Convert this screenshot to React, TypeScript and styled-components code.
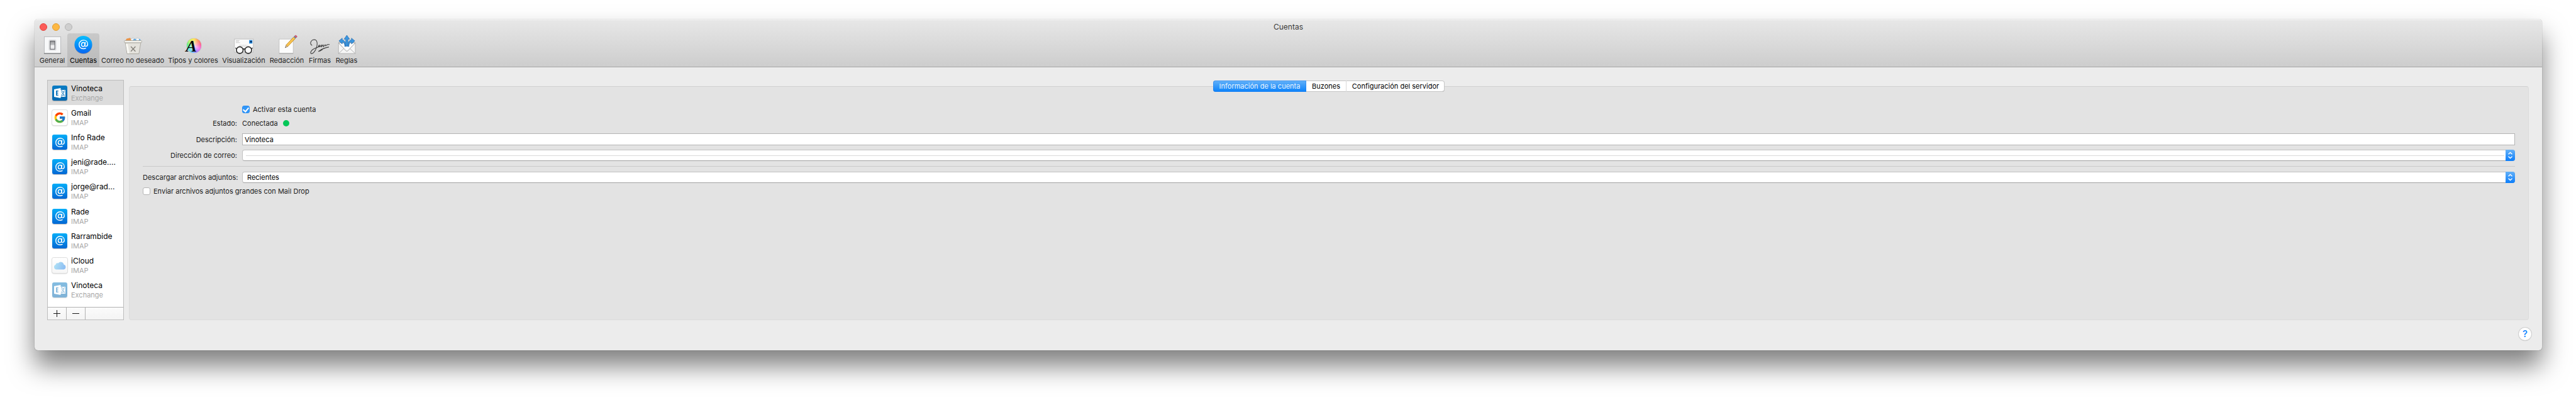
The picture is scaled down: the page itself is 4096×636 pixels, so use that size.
import React, { useState } from "react";
import styled, { createGlobalStyle, css } from "styled-components";
import { FcGoogle } from "react-icons/fc";

const GlobalStyle = createGlobalStyle`
  * { box-sizing: border-box; }
  body {
    margin: 0;
    background: #fff;
    color: #1c1c1c;
    font-family: Inter, Roboto, sans-serif;
    font-size: 11px;
    line-height: 16px;
  }
  button, input, select { font: inherit; color: inherit; margin: 0; padding: 0; }
`;

const Desktop = styled.div`
  display: flex;
  min-height: 100vh;
  padding: 31px 54px 79px 55px;
`;

const Window = styled.div`
  flex: 1;
  display: flex;
  flex-direction: column;
  background: #ececec;
  border-radius: 5px;
  box-shadow: 0 0 1px rgba(0, 0, 0, 0.6), 0 25px 40px rgba(0, 0, 0, 0.5);
`;

const Header = styled.header`
  background: linear-gradient(#e7e7e7, #cdcdcd);
  border-top: 1px solid #f6f6f6;
  border-bottom: 1px solid #a6a6a6;
  border-radius: 5px 5px 0 0;
`;

const TitleBar = styled.div`
  display: grid;
  grid-template-columns: 1fr auto 1fr;
  align-items: center;
  height: 21px;
`;

const Title = styled.h1`
  margin: 0;
  font-size: 12px;
  font-weight: 400;
  line-height: 21px;
  color: #3a3a3a;
`;

const Lights = styled.div`
  display: flex;
  gap: 8px;
  padding-left: 8px;
`;

const Light = styled.button<{ $fill: string; $edge: string }>`
  width: 12px;
  height: 12px;
  border-radius: 50%;
  border: 1px solid ${(p) => p.$edge};
  background: ${(p) => p.$fill};
`;

const Toolbar = styled.nav`
  display: flex;
  padding-left: 4px;
`;

const Tool = styled.button<{ $width: number; $active?: boolean }>`
  display: flex;
  flex-direction: column;
  align-items: center;
  gap: 2px;
  width: ${(p) => p.$width}px;
  height: 53px;
  padding-top: 3px;
  border: 0;
  border-radius: 4px 4px 0 0;
  background: ${(p) => (p.$active ? "linear-gradient(#c9c9c9, #b9b9b9)" : "none")};
  color: ${(p) => (p.$active ? "#000" : "#262626")};
  line-height: 14px;
  white-space: nowrap;
`;

const ToolIcon = styled.svg`
  width: 31px;
  height: 31px;
  flex: none;
  overflow: visible;
`;

const Wheel = styled.span`
  position: relative;
  width: 31px;
  height: 31px;
  flex: none;
  &::before {
    content: "";
    position: absolute;
    left: 5px;
    top: 5px;
    width: 23px;
    height: 23px;
    border-radius: 50%;
    background: radial-gradient(rgba(255, 255, 255, 0.8), rgba(255, 255, 255, 0) 70%),
      conic-gradient(#ffe14a, #ff8a5c, #ff5a8c, #f56af0, #9a7dff, #5cc6ff, #5cf5d0, #5cf07a, #c8f55a, #ffe14a);
    box-shadow: 0 0 1px rgba(0, 0, 0, 0.4);
  }
`;

const WheelLetter = styled.span`
  position: absolute;
  left: 4px;
  top: 4px;
  font: italic 700 26px/27px "Liberation Serif", serif;
  color: #0a0a0a;
`;

const Body = styled.main`
  flex: 1;
  display: flex;
  gap: 8px;
  padding: 20px 21px 0 20px;
`;

const Sidebar = styled.aside`
  display: flex;
  flex-direction: column;
  width: 122px;
  flex: none;
  border: 1px solid #bdbdbd;
  background: #fff;
`;

const Accounts = styled.ul`
  flex: 1;
  display: flex;
  flex-direction: column;
  margin: 0;
  padding: 0 0 7px;
  list-style: none;
`;

const AccountItem = styled.li`
  flex: 1;
  display: flex;
`;

const AccountButton = styled.button<{ $selected: boolean }>`
  flex: 1;
  min-width: 0;
  display: flex;
  align-items: center;
  gap: 6px;
  padding: 0 6px 0 7px;
  border: 0;
  text-align: left;
  background: ${(p) => (p.$selected ? "#dcdcdc" : "#fff")};
`;

const AccountText = styled.span`
  display: flex;
  flex-direction: column;
  min-width: 0;
`;

const AccountName = styled.span`
  font-size: 12px;
  line-height: 16px;
  color: #000;
  white-space: nowrap;
`;

const AccountKind = styled.span`
  line-height: 14px;
  color: #a8a8a8;
`;

const Badge = styled.span<{ $bg: string; $outlined?: boolean; $dim?: boolean }>`
  display: flex;
  align-items: center;
  justify-content: center;
  width: 24px;
  height: 24px;
  flex: none;
  border-radius: 3px;
  background: ${(p) => p.$bg};
  opacity: ${(p) => (p.$dim ? 0.5 : 1)};
  box-shadow: ${(p) =>
    p.$outlined ? "0 0 0 1px #dedede, 0 1px 2px rgba(0,0,0,.3)" : "0 1px 1px rgba(0,0,0,.25)"};
`;

const SidebarBar = styled.div`
  display: flex;
  height: 20px;
  border-top: 1px solid #b2b2b2;
  background: linear-gradient(#fbfbfb, #f4f4f4);
`;

const BarButton = styled.button`
  display: flex;
  align-items: center;
  justify-content: center;
  width: 30px;
  border: 0;
  border-right: 1px solid #b2b2b2;
  background: none;
`;

const Content = styled.section`
  flex: 1;
  display: flex;
  flex-direction: column;
  padding-top: 1px;
`;

const Tabs = styled.div`
  position: relative;
  align-self: center;
  display: flex;
  height: 18px;
  margin-bottom: -9px;
  border-radius: 4px;
  background: #fff;
  box-shadow: inset 0 0 0 1px #c6c6c6, inset 0 -1px 0 #a2a2a2;
`;

const Tab = styled.button<{ $width: number; $active: boolean }>`
  width: ${(p) => p.$width}px;
  border: 0;
  background: none;
  color: #000;
  line-height: 18px;
  white-space: nowrap;
  & + & + & {
    border-left: 1px solid #dadada;
  }
  ${(p) =>
    p.$active &&
    css`
      color: #e9f4ff;
      border-radius: 4px 0 0 4px;
      background: linear-gradient(#64b1f8, #0a82fb);
      box-shadow: inset 0 0 0 1px rgba(20, 110, 230, 0.35);
    `}
`;

const Panel = styled.form`
  flex: 1;
  padding: 28px 21px 0;
  border: 1px solid #dcdcdc;
  border-top-color: #d0d0d0;
  border-radius: 4px;
  background: #e3e3e3;
`;

const Row = styled.div<{ $gap?: number; $height?: number }>`
  display: flex;
  align-items: center;
  gap: 8px;
  height: ${(p) => p.$height ?? 16}px;
  margin-top: ${(p) => p.$gap ?? 0}px;
`;

const labelColumn = css`
  width: 150px;
  flex: none;
  text-align: right;
  white-space: nowrap;
`;
const Label = styled.label`
  ${labelColumn}
`;
const Caption = styled.span`
  ${labelColumn}
`;

const Check = styled.label`
  display: flex;
  align-items: center;
  gap: 5px;
`;

const CheckBox = styled.input`
  appearance: none;
  display: flex;
  justify-content: center;
  width: 12px;
  height: 12px;
  border: 1px solid #b5b5b5;
  border-radius: 3px;
  background: #fff;
  &:checked {
    border-color: #2a8df2;
    background: #3297f8;
  }
  &:checked::after {
    content: "";
    width: 4px;
    height: 7px;
    border: solid #fff;
    border-width: 0 2px 2px 0;
    transform: rotate(40deg);
  }
`;

const StatusDot = styled.span`
  width: 10px;
  height: 10px;
  border-radius: 50%;
  background: #04c758;
`;

const TextField = styled.input`
  flex: 1;
  height: 19px;
  padding: 0 3px;
  border: 1px solid #b4b4b4;
  background: #fff;
  color: #000;
`;

const SelectBox = styled.div<{ $blank?: boolean }>`
  position: relative;
  flex: 1;
  display: flex;
  height: 18px;
  ${(p) =>
    p.$blank &&
    css`
      &::before {
        content: "";
        position: absolute;
        left: 6px;
        right: 17px;
        top: 9px;
        height: 1px;
        background: #dadada;
      }
    `}
`;

const Select = styled.select`
  appearance: none;
  flex: 1;
  padding: 0 20px 0 7px;
  border: 1px solid #c2c2c2;
  border-bottom-color: #a2a2a2;
  border-radius: 4px;
  background: #fff;
  color: #000;
  line-height: 16px;
`;

const SelectArrows = styled.span`
  position: absolute;
  right: 0;
  top: 0;
  display: flex;
  align-items: center;
  justify-content: center;
  width: 15px;
  height: 18px;
  border-radius: 0 4px 4px 0;
  background: linear-gradient(#64b1f8, #0a7dfb);
  pointer-events: none;
`;

const Divider = styled.hr`
  height: 1px;
  margin: 8px 0;
  border: 0;
  background: #cacaca;
`;

const Footer = styled.footer`
  display: flex;
  justify-content: flex-end;
  padding: 12px 17px 16px;
`;

const HelpButton = styled.button`
  width: 20px;
  height: 20px;
  border: 0;
  border-radius: 50%;
  background: #fff;
  color: #0a84ff;
  font-size: 15px;
  font-weight: 500;
  line-height: 20px;
  box-shadow: 0 0 0 1px #cfcfcf, 0 1px 1px rgba(0, 0, 0, 0.3);
`;

const AtMark = ({ size }: { size: number }) => (
  <svg width={size} height={size} viewBox="0 0 24 24" fill="none" stroke="#fff" strokeWidth="2" strokeLinecap="round">
    <ellipse cx="11.6" cy="12" rx="3.8" ry="4.4" transform="rotate(14 11.6 12)" />
    <path d="M16.3 7.6l-1.1 6.2c-.4 3.4 6.3 3.3 6.3-2.6C21.500 5.800 17.300 2.500 12.300 2.500 6.600 2.500 2.500 6.700 2.500 12.200c0 5.500 4 9.300 9.600 9.300 1.900 0 3.600-.4 5-1.100" />
  </svg>
);

const ExchangeMark = () => (
  <svg width="20" height="20" viewBox="0 0 20 20">
    <rect x="11" y="5" width="8" height="11" fill="#fff" />
    <path d="M12 6.500h2l1.500 2 1.500-2h1M12 14.500h2l1.500-2 1.500 2h1M12.500 8l5 5M17.500 8l-5 5" stroke="#0a70b8" strokeWidth="1" fill="none" />
    <path d="M1 4L11.500 2v16L1 16z" fill="#fff" />
    <path d="M7.800 6.700H4.800v6.600h3M4.800 10h2.700" stroke="#0a70b8" strokeWidth="1.600" fill="none" />
  </svg>
);

const CloudMark = () => (
  <svg width="20" height="14" viewBox="0 0 20 14">
    <defs>
      <linearGradient id="cloud" x1="0" y1="0" x2="1" y2="0.300">
        <stop offset="0" stopColor="#b5e6f5" />
        <stop offset="1" stopColor="#8fc0f3" />
      </linearGradient>
    </defs>
    <path d="M4.200 13.400a4 4 0 0 1-.6-7.700 3 3 0 0 1 4-2.300A5 5 0 0 1 16.500 5.800a3.900 3.900 0 0 1-.2 7.600z" fill="url(#cloud)" />
  </svg>
);

const GeneralIcon = () => (
  <ToolIcon viewBox="0 0 32 32">
    <defs>
      <linearGradient id="knob" x1="0" y1="0" x2="0" y2="1">
        <stop offset="0" stopColor="#8f9093" />
        <stop offset="0.500" stopColor="#c9cacc" />
        <stop offset="0.520" stopColor="#f5f5f6" />
        <stop offset="1" stopColor="#e4e5e7" />
      </linearGradient>
    </defs>
    <rect x="2.500" y="2.500" width="27" height="27.500" fill="#f7f8f9" stroke="#b9babc" />
    <path d="M2 30h28" stroke="#77787a" strokeWidth="1.200" />
    <rect x="10" y="7.500" width="12" height="17.500" rx="2" fill="#e9eaec" stroke="#d5d6d8" strokeWidth="0.700" />
    <rect x="12.200" y="9.500" width="7.600" height="13.500" fill="url(#knob)" stroke="#55565a" />
  </ToolIcon>
);

const AccountsIcon = () => (
  <ToolIcon viewBox="0 0 32 32">
    <defs>
      <linearGradient id="atball" x1="0" y1="0" x2="0" y2="1">
        <stop offset="0" stopColor="#08bdfd" />
        <stop offset="1" stopColor="#0766f2" />
      </linearGradient>
    </defs>
    <ellipse cx="16" cy="16.600" rx="14.300" ry="14.300" fill="rgba(0,0,0,.2)" />
    <circle cx="16" cy="15.500" r="14.500" fill="url(#atball)" />
    <g transform="translate(7.200 6.300) scale(0.740)">
      <AtMark size={24} />
    </g>
  </ToolIcon>
);

const JunkIcon = () => (
  <ToolIcon viewBox="0 0 32 32">
    <path d="M4 9l2-3 5-1 2 1 3-1.500 3 2 4-2 3 1 2 3.500z" fill="#f3f5f7" stroke="#9fb0ba" strokeWidth="0.600" />
    <path d="M3.500 9l2-3.200 6-1.300 2 4.500z" fill="#ea9448" />
    <path d="M15 8.800l3-3 3 1 1 2zM25 8.800l2-3 2 3z" fill="#5fa9e2" />
    <path d="M3 10.500L6.300 30.500h19.400L29 10.500z" fill="#e4e2dc" stroke="#a5a39b" strokeWidth="0.900" />
    <path d="M4 14.500l2.800 15.500h3L7.500 14.500z" fill="#f8f8f4" />
    <rect x="1.800" y="8.800" width="28.400" height="3.400" rx="1" fill="#f5f4ef" stroke="#a5a39b" strokeWidth="0.900" />
    <path d="M3 13h26" stroke="#c2c0b9" strokeWidth="0.800" />
    <path d="M12.500 18.500l7.500 8M20 18.500l-7.500 8" stroke="#85827b" strokeWidth="1.500" />
  </ToolIcon>
);

const TypesIcon = () => (
  <Wheel>
    <WheelLetter aria-hidden="true">A</WheelLetter>
  </Wheel>
);

const ViewIcon = () => (
  <ToolIcon viewBox="0 0 32 32">
    <rect x="0.800" y="6.300" width="31" height="21.500" fill="#fbfbfb" stroke="#b5b5b5" strokeWidth="0.800" />
    <path d="M3 8.800h6M3 10.500h5M3 12.200h7" stroke="#b8b8b8" strokeWidth="0.700" />
    <path d="M9 16.500h13M10 18.500h10" stroke="#aaa" strokeWidth="0.700" strokeDasharray="2 1" />
    <rect x="25" y="8" width="5.200" height="5.600" fill="#1f86dd" />
    <circle cx="28" cy="10.600" r="1.400" fill="#0a2c55" />
    <g fill="rgba(255,255,255,.6)" stroke="#2b2b2b" strokeWidth="1.700">
      <circle cx="9.500" cy="24.500" r="5.500" />
      <circle cx="23.500" cy="24.500" r="5.500" />
      <path d="M14.800 23.200q1.700-1.700 3.400 0" fill="none" />
      <path d="M4 22.500L2.500 20.500M29 22.500l1.500-2" fill="none" strokeWidth="1.200" />
    </g>
  </ToolIcon>
);

const ComposeIcon = () => (
  <ToolIcon viewBox="0 0 32 32">
    <rect x="3" y="6.300" width="23" height="23.500" fill="#fcfcfc" stroke="#bcbcbc" strokeWidth="0.800" />
    <path d="M3 29.900h23" stroke="#9a9a9a" strokeWidth="0.800" />
    <path d="M13 20.500l1.300-4.400 2.800 2.400z" fill="#e9cfa5" stroke="#6b5130" strokeWidth="0.500" />
    <path d="M13 20.500l.6-1.700 1 .9z" fill="#222" />
    <path d="M14.300 16.100L26.800 2.800l2.900 2.500-12.600 13.200z" fill="#f6b93b" stroke="#a5721c" strokeWidth="0.600" />
    <path d="M15.700 17.200L28.200 4" stroke="#fbdc83" strokeWidth="0.900" />
    <path d="M26.800 2.800l1.400-1.400 2.900 2.500-1.400 1.400z" fill="#5b7fa8" />
    <path d="M28.200 1.400l1-1q.8-.7 2.200.5t.7 2l-1 1z" fill="#e8607d" stroke="#8b3040" strokeWidth="0.500" />
  </ToolIcon>
);

const SignatureIcon = () => (
  <ToolIcon viewBox="0 0 32 32" fill="none" stroke="#3f3f3f" strokeWidth="1.100" strokeLinecap="round" strokeLinejoin="round">
    <path d="M3 16.500C-1.500 13.500 2 7.500 7 7.300c5 0 5.500 7 3.500 13.200C9 25 5.500 30.800 2 30.300-.5 29.600 1.500 24.500 7 22c4-1.800 8-2.600 9-5 .3-1.300-2-.9-2.200.8 0 2 2.700 1.600 4.200-.8l.7-1.200-.2 3.400 3-3.500.4 3.300 3-3.500c.6 2.500 1 2.700 2.500.5 1.200-1.200 2.200-.9 4.300-.7" />
    <path d="M14 26.500c4-3.200 10-5.600 16.500-7M14 26.500c2 .2 4-1.500 6-2.800" />
  </ToolIcon>
);

const RulesIcon = () => (
  <ToolIcon viewBox="0 0 32 32">
    <rect x="2.300" y="12.500" width="27.600" height="17.500" fill="#f6f6f6" stroke="#a9a9a9" strokeWidth="0.800" />
    <path d="M2.500 30L12.500 20.500M29.700 30L19.500 20.500" stroke="#adadad" strokeWidth="1" />
    <path d="M2.300 12.500L14.500 25.500q1.600 1.400 3.200 0L29.900 12.500z" fill="#fff" stroke="#9f9f9f" strokeWidth="1" />
    <g fill="#3b97e0" stroke="#1d67ad" strokeWidth="0.700" strokeLinejoin="round">
      <path d="M14.200 18V6.500h-2.700L16 0l4.500 6.500h-2.700V18z" />
      <path d="M12.600 18.500c0-4.500-1.300-7-4.200-7.300v3.200L3 9.300 8.400 4.800v3C12.500 8 14 12 14 18.500z" />
      <path d="M19.400 18.500c0-4.500 1.300-7 4.200-7.300v3.200L29 9.300l-5.400-4.500v3C19.500 8 18 12 18 18.500z" />
    </g>
  </ToolIcon>
);

const tools = [
  { name: "General", width: 48, Icon: GeneralIcon },
  { name: "Cuentas", width: 51, Icon: AccountsIcon, active: true },
  { name: "Correo no deseado", width: 106, Icon: JunkIcon },
  { name: "Tipos y colores", width: 86, Icon: TypesIcon },
  { name: "Visualización", width: 75, Icon: ViewIcon },
  { name: "Redacción", width: 62, Icon: ComposeIcon },
  { name: "Firmas", width: 43, Icon: SignatureIcon },
  { name: "Reglas", width: 42, Icon: RulesIcon },
];

type Kind = "exchange" | "google" | "at" | "icloud" | "exchangeOff";

const accounts: { name: string; type: string; kind: Kind }[] = [
  { name: "Vinoteca", type: "Exchange", kind: "exchange" },
  { name: "Gmail", type: "IMAP", kind: "google" },
  { name: "Info Rade", type: "IMAP", kind: "at" },
  { name: "jeni@rade....", type: "IMAP", kind: "at" },
  { name: "jorge@rad...", type: "IMAP", kind: "at" },
  { name: "Rade", type: "IMAP", kind: "at" },
  { name: "Rarrambide", type: "IMAP", kind: "at" },
  { name: "iCloud", type: "IMAP", kind: "icloud" },
  { name: "Vinoteca", type: "Exchange", kind: "exchangeOff" },
];

const AccountBadge = ({ kind }: { kind: Kind }) => {
  if (kind === "google")
    return (
      <Badge $bg="#fff" $outlined>
        <FcGoogle size={20} />
      </Badge>
    );
  if (kind === "icloud")
    return (
      <Badge $bg="linear-gradient(#fff, #f6f6f6)" $outlined>
        <CloudMark />
      </Badge>
    );
  if (kind === "at")
    return (
      <Badge $bg="linear-gradient(#04adf8, #0468d4)">
        <AtMark size={17} />
      </Badge>
    );
  return (
    <Badge $bg="linear-gradient(#0a7cc4, #0568b0)" $dim={kind === "exchangeOff"}>
      <ExchangeMark />
    </Badge>
  );
};

const tabs = [
  { name: "Información de la cuenta", width: 148 },
  { name: "Buzones", width: 63 },
  { name: "Configuración del servidor", width: 157 },
];

const Arrows = () => (
  <SelectArrows>
    <svg width="9" height="12" viewBox="0 0 9 12" fill="none" stroke="#fff" strokeWidth="1.400">
      <path d="M1.500 4.300l3-2.800 3 2.800M1.500 7.700l3 2.800 3-2.800" />
    </svg>
  </SelectArrows>
);

export default function App() {
  const [selected, setSelected] = useState(0);
  const [tab, setTab] = useState(0);
  return (
    <>
      <GlobalStyle />
      <Desktop>
        <Window>
          <Header>
            <TitleBar>
              <Lights>
                <Light aria-label="Cerrar" $fill="#fc5b57" $edge="#e2443f" />
                <Light aria-label="Minimizar" $fill="#fdb843" $edge="#e09c33" />
                <Light aria-label="Ampliar" $fill="#cfcfcf" $edge="#b4b4b4" />
              </Lights>
              <Title>Cuentas</Title>
            </TitleBar>
            <Toolbar>
              {tools.map(({ name, width, Icon, active }) => (
                <Tool key={name} type="button" $width={width} $active={active}>
                  <Icon />
                  {name}
                </Tool>
              ))}
            </Toolbar>
          </Header>
          <Body>
            <Sidebar>
              <Accounts>
                {accounts.map((a, i) => (
                  <AccountItem key={i}>
                    <AccountButton type="button" $selected={i === selected} onClick={() => setSelected(i)}>
                      <AccountBadge kind={a.kind} />
                      <AccountText>
                        <AccountName>{a.name}</AccountName>
                        <AccountKind>{a.type}</AccountKind>
                      </AccountText>
                    </AccountButton>
                  </AccountItem>
                ))}
              </Accounts>
              <SidebarBar>
                <BarButton type="button" aria-label="Añadir cuenta">
                  <svg width="11" height="11" viewBox="0 0 11 11" stroke="#1a1a1a">
                    <path d="M0 5.500h11M5.500 0v11" />
                  </svg>
                </BarButton>
                <BarButton type="button" aria-label="Eliminar cuenta">
                  <svg width="11" height="11" viewBox="0 0 11 11" stroke="#1a1a1a">
                    <path d="M0 5.500h11" />
                  </svg>
                </BarButton>
              </SidebarBar>
            </Sidebar>
            <Content>
              <Tabs role="tablist">
                {tabs.map((t, i) => (
                  <Tab
                    key={t.name}
                    type="button"
                    role="tab"
                    aria-selected={i === tab}
                    $width={t.width}
                    $active={i === tab}
                    onClick={() => setTab(i)}
                  >
                    {t.name}
                  </Tab>
                ))}
              </Tabs>
              <Panel>
                <Row>
                  <Caption />
                  <Check>
                    <CheckBox type="checkbox" defaultChecked />
                    Activar esta cuenta
                  </Check>
                </Row>
                <Row $gap={6}>
                  <Caption>Estado:</Caption>
                  <span>Conectada</span>
                  <StatusDot />
                </Row>
                <Row $gap={8} $height={19}>
                  <Label htmlFor="description">Descripción:</Label>
                  <TextField id="description" type="text" defaultValue="Vinoteca" />
                </Row>
                <Row $gap={7} $height={18}>
                  <Label htmlFor="address">Dirección de correo:</Label>
                  <SelectBox $blank>
                    <Select id="address" defaultValue="">
                      <option value=""></option>
                    </Select>
                    <Arrows />
                  </SelectBox>
                </Row>
                <Divider />
                <Row $height={18}>
                  <Label htmlFor="attachments">Descargar archivos adjuntos:</Label>
                  <SelectBox>
                    <Select id="attachments" defaultValue="Recientes">
                      <option>Recientes</option>
                    </Select>
                    <Arrows />
                  </SelectBox>
                </Row>
                <Row $gap={5}>
                  <Check>
                    <CheckBox type="checkbox" />
                    Enviar archivos adjuntos grandes con Mail Drop
                  </Check>
                </Row>
              </Panel>
            </Content>
          </Body>
          <Footer>
            <HelpButton type="button" aria-label="Ayuda">?</HelpButton>
          </Footer>
        </Window>
      </Desktop>
    </>
  );
}
